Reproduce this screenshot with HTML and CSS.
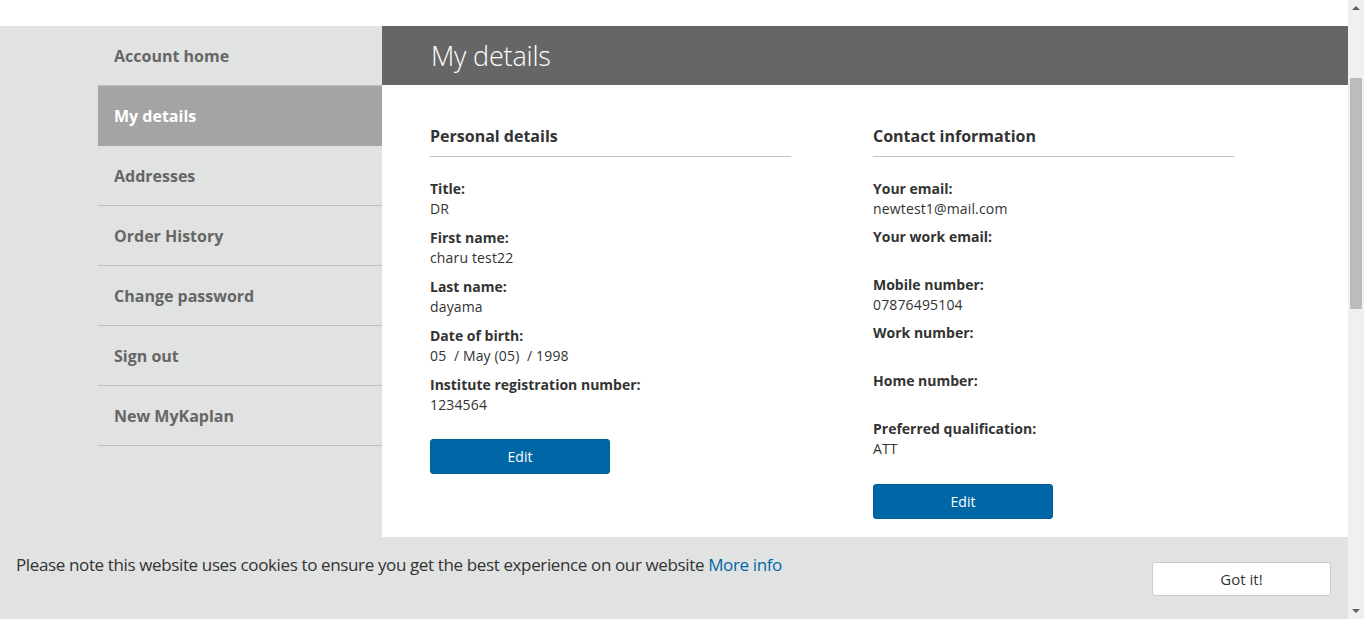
FILE: index.html
```html
<!DOCTYPE html>
<html lang="en">
<head>
<meta charset="utf-8">
<title>My details</title>
<link rel="stylesheet" href="styles.css">
</head>
<body>
<div class="frame">
  <div class="page">
    <div class="topstrip"></div>
    <div class="layout">
      <nav class="sidebar">
        <a class="nav-item first" href="#">Account home</a>
        <a class="nav-item active" href="#">My details</a>
        <a class="nav-item" href="#">Addresses</a>
        <a class="nav-item" href="#">Order History</a>
        <a class="nav-item" href="#">Change password</a>
        <a class="nav-item" href="#">Sign out</a>
        <a class="nav-item" href="#">New MyKaplan</a>
      </nav>
      <main class="main">
        <header class="main-head"><h1>My details</h1></header>
        <div class="columns">
          <section class="col col-personal">
            <h2>Personal details</h2>
            <dl class="fields">
              <div class="field"><dt>Title:</dt><dd>DR</dd></div>
              <div class="field"><dt>First name:</dt><dd>charu test22</dd></div>
              <div class="field"><dt>Last name:</dt><dd>dayama</dd></div>
              <div class="field"><dt>Date of birth:</dt><dd class="pre">05  / May (05)  / 1998</dd></div>
              <div class="field"><dt>Institute registration number:</dt><dd>1234564</dd></div>
            </dl>
            <button class="btn-edit" type="button">Edit</button>
          </section>
          <section class="col col-contact">
            <h2>Contact information</h2>
            <dl class="fields">
              <div class="field"><dt>Your email:</dt><dd>newtest1@mail.com</dd></div>
              <div class="field"><dt>Your work email:</dt><dd></dd></div>
              <div class="field"><dt>Mobile number:</dt><dd>07876495104</dd></div>
              <div class="field"><dt>Work number:</dt><dd></dd></div>
              <div class="field"><dt>Home number:</dt><dd></dd></div>
              <div class="field"><dt>Preferred qualification:</dt><dd>ATT</dd></div>
            </dl>
            <button class="btn-edit" type="button">Edit</button>
          </section>
        </div>
      </main>
    </div>
  </div>
  <div class="scrollbar">
    <div class="arrow up"></div>
    <div class="track"><div class="thumb"></div></div>
    <div class="arrow down"></div>
  </div>
</div>
<div class="cookie">
  <p class="cookie-text">Please note this website uses cookies to ensure you get the best experience on our website <a href="#">More info</a></p>
  <button class="cookie-btn" type="button">Got it!</button>
</div>
</body>
</html>
```

FILE: styles.css
```css
* { box-sizing: border-box; }
html, body { margin: 0; padding: 0; }
body {
  background: #e1e2e2;
  font-family: "Open Sans", "Liberation Sans", sans-serif;
  color: #333;
  overflow: hidden;
}
.frame {
  display: flex;
  height: 619px;
  overflow: hidden;
}
.page {
  flex: 1;
  display: flex;
  flex-direction: column;
}
.topstrip {
  height: 26px;
  background: #fff;
}
.layout {
  flex: 1;
  display: flex;
  padding-left: 98px;
}
.sidebar {
  width: 284px;
  display: flex;
  flex-direction: column;
}
.nav-item {
  display: block;
  height: 60px;
  line-height: 59px;
  padding: 1px 0 0 16px;
  font-size: 16px;
  font-weight: 700;
  color: #666;
  text-decoration: none;
  border-bottom: 1px solid #bdbdbd;
}
.nav-item.active {
  background: #a4a4a4;
  color: #fff;
  border-bottom-color: #a4a4a4;
}
.main {
  flex: 1;
  background: #fff;
}
.main-head {
  height: 59px;
  background: #666;
  padding-left: 49px;
}
.main-head h1 {
  margin: 0;
  font-size: 27px;
  font-weight: 300;
  color: #fff;
  line-height: 60px;
  letter-spacing: -0.2px;
}
.columns {
  display: grid;
  grid-template-columns: 361px 361px;
  column-gap: 82px;
  padding: 40px 48px 0;
}
.col h2 {
  margin: 0 0 22px;
  font-size: 16px;
  font-weight: 700;
  line-height: 22px;
  padding-bottom: 9px;
  border-bottom: 1px solid #c4c4c4;
  color: #333;
}
.fields { margin: 0; }
.field { margin-bottom: 8px; }
.col-personal .field { margin-bottom: 9px; }
.field dt {
  font-size: 14px;
  font-weight: 700;
  line-height: 20px;
  color: #333;
}
.field dd {
  margin: 0;
  font-size: 14px;
  line-height: 20px;
  min-height: 20px;
  color: #333;
  letter-spacing: 0.15px;
}
.field dd.pre { white-space: pre; }
.btn-edit {
  margin-top: 15px;
  width: 180px;
  height: 35px;
  background: #0067a7;
  border: 1px solid #005d97;
  border-radius: 3px;
  color: #fff;
  font-family: inherit;
  font-size: 14px;
  cursor: pointer;
}
.col-contact .btn-edit { margin-top: 17px; }
.scrollbar {
  width: 16px;
  background: #f0f0f0;
  display: flex;
  flex-direction: column;
}
.arrow { height: 17px; position: relative; }
.arrow::after {
  content: "";
  position: absolute;
  left: 4px;
  width: 0; height: 0;
  border-left: 4px solid transparent;
  border-right: 4px solid transparent;
}
.arrow.up::after { top: 6px; border-bottom: 4px solid #606060; }
.arrow.down::after { bottom: 6px; border-top: 4px solid #606060; }
.track { flex: 1; padding: 61px 2px 0; }
.thumb { height: 231px; background: #bcbcbc; }
.cookie {
  position: fixed;
  left: 0;
  bottom: 0;
  width: 1348px;
  height: 82px;
  background: #e1e2e2;
  display: flex;
  justify-content: space-between;
  padding: 0 17px 0 16px;
}
.cookie-text {
  margin: 16px 0 0;
  font-size: 17px;
  line-height: 24px;
  color: #333;
  letter-spacing: -0.37px;
}
.cookie-text a { color: #0067a7; text-decoration: none; }
.cookie-btn {
  margin-top: 25px;
  width: 179px;
  height: 34px;
  background: #fff;
  border: 1px solid #cbcbcb;
  border-radius: 3px;
  font-family: inherit;
  font-size: 15px;
  color: #333;
}
```
